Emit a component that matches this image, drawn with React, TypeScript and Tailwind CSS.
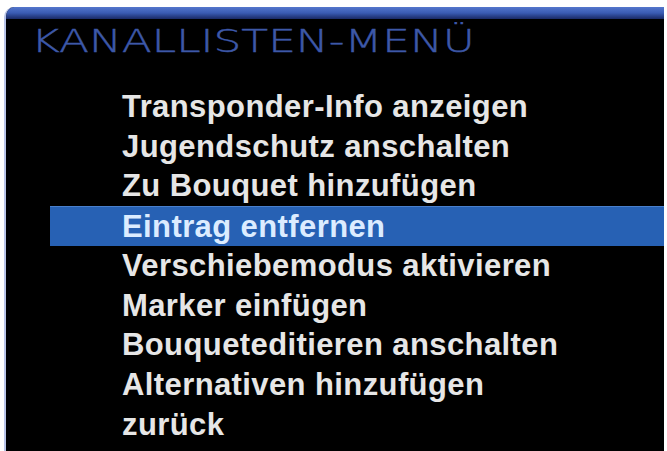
import React from "react";

const items = [
  "Transponder-Info anzeigen",
  "Jugendschutz anschalten",
  "Zu Bouquet hinzufügen",
  "Eintrag entfernen",
  "Verschiebemodus aktivieren",
  "Marker einfügen",
  "Bouqueteditieren anschalten",
  "Alternativen hinzufügen",
  "zurück",
];

export default function App() {
  return (
    <div className="w-[667px] h-[451px] bg-white overflow-hidden pt-[7px] pl-[4px] pr-[3px]">
      <div className="h-[444px] bg-black rounded-tl-[10px] overflow-hidden border-l-[2px] border-[#b8c4e8] flex flex-col">
        <div className="h-[12px] bg-gradient-to-b from-[#5476cc] via-[#3a5bb3] to-[#1a2a66] shrink-0" />
        <div className="h-[68px] shrink-0 pl-[25px] pt-[2px]">
          <div
            className="origin-left scale-x-[1.37] text-[32px] leading-[40px] text-[#3d58a8] whitespace-nowrap"
            style={{ fontFamily: '"DejaVu Sans", sans-serif', fontWeight: 200, WebkitTextStroke: "0.4px #3d58a8" }}
          >
            KANALLISTEN-MENÜ
          </div>
        </div>
        <div className="flex flex-col">
          {items.map((t, i) => (
            <div
              key={t}
              className={
                i === 3
                  ? "h-[39.75px] ml-[44px] pl-[72px] bg-[#2761b4] border-t border-[#4a80cc] text-[#dcecff] flex items-center"
                  : "h-[39.75px] ml-[44px] pl-[72px] text-[#e6e6e6] flex items-center"
              }
            >
              <span
                className="text-[31px] leading-[40px] font-bold whitespace-nowrap tracking-[0.4px]"
                style={{ fontFamily: '"Liberation Sans", Arial, sans-serif' }}
              >
                {t}
              </span>
            </div>
          ))}
        </div>
      </div>
    </div>
  );
}
